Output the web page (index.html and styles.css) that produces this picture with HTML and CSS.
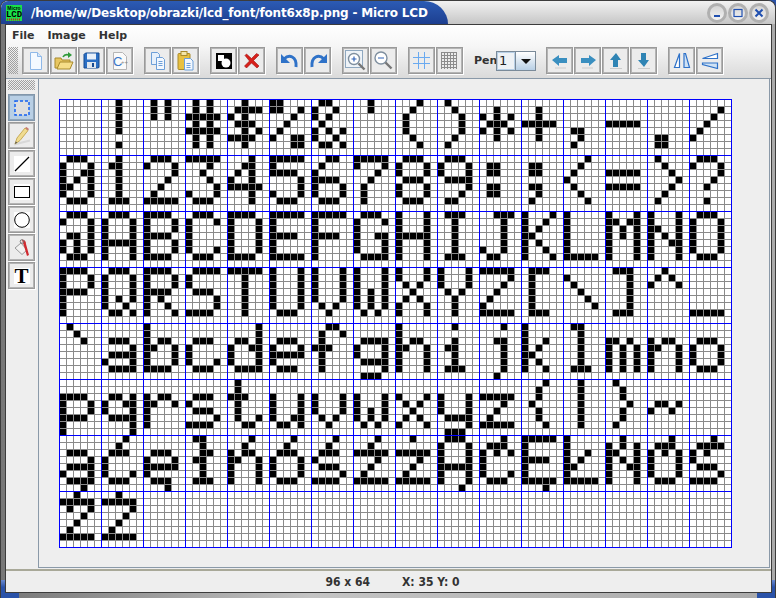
FILE: index.html
```html
<!DOCTYPE html>
<html lang="en">
<head>
  <meta charset="UTF-8">
  <meta name="viewport" content="width=device-width, initial-scale=1.0">
  <title>Micro LCD</title>
  <link rel="stylesheet" href="styles.css">
</head>
<body>
  <div class="window">
    <div class="titlebar">
      <div class="title-tab">
        <svg class="app-logo" width="16" height="16" viewBox="0 0 16 16">
          <rect width="16" height="16" fill="#19e04a"/>
          <text x="8" y="5" class="logo-small" text-anchor="middle">Micro</text>
          <text x="8" y="12" class="logo-big" text-anchor="middle">LCD</text>
          <path d="M1 14.500h14" stroke="#d01818" stroke-width="2" stroke-dasharray="1 1"/>
        </svg>
        <span class="title-text">/home/w/Desktop/obrazki/lcd_font/font6x8p.png - Micro LCD</span>
      </div>
      <div class="win-buttons">
        <div class="win-btn"><svg width="10" height="10" viewBox="0 0 10 10"><path d="M2 8h6" stroke="#1f4fb0" stroke-width="2"/></svg></div>
        <div class="win-btn"><svg width="10" height="10" viewBox="0 0 10 10"><rect x="1" y="1.500" width="8" height="7" fill="none" stroke="#1f4fb0" stroke-width="1.200"/></svg></div>
        <div class="win-btn"><svg width="10" height="10" viewBox="0 0 10 10"><path d="M1.500 1.500l7 7M8.500 1.500l-7 7" stroke="#1f4fb0" stroke-width="2"/></svg></div>
      </div>
    </div>

    <div class="frame">
      <div class="corner corner-left"></div>
      <div class="corner corner-right"></div>
      <div class="client">
        <div class="top-area">
          <div class="menubar">
            <span class="menu-item">File</span>
            <span class="menu-item">Image</span>
            <span class="menu-item">Help</span>
          </div>
          <div class="toolbar">
            <div class="grip grip-h"></div>
            <div class="tool-group">
              <div class="tool"><svg width="16" height="18" viewBox="0 0 16 18"><path d="M2.500 .5h7l4 4v13h-11z" fill="#f4f9ff" stroke="#8fb8e8"/><path d="M9.500 .5v4h4" fill="#d5e5f8" stroke="#8fb8e8"/></svg></div>
              <div class="tool"><svg width="20" height="18" viewBox="0 0 20 18"><path d="M1 6h6l1 2h8v8H1z" fill="#e8c660" stroke="#a88a2c"/><path d="M3 17l3-7h13l-3 7z" fill="#f6de88" stroke="#a88a2c"/><path d="M9 5c1-2 3-3 6-2" fill="none" stroke="#2f9a3a" stroke-width="1.600"/><path d="M14 0l4 3-4 3z" fill="#2f9a3a"/></svg></div>
              <div class="tool"><svg width="17" height="17" viewBox="0 0 17 17"><path d="M1 2.500 2.500 1H16v14.500L14.500 16H1z" fill="#2b6fc4" stroke="#174a90"/><rect x="4" y="1.500" width="9" height="6" fill="#e8f0fa"/><rect x="4" y="10" width="9" height="6" fill="#dfe6ee"/><rect x="9" y="11" width="2" height="4" fill="#174a90"/></svg></div>
              <div class="tool"><svg width="16" height="18" viewBox="0 0 16 18"><path d="M1.500 .5h9l4 4v13h-13z" fill="#fafafa" stroke="#b5b5b5"/><text x="1" y="14" class="cpp-big">C</text><text x="9" y="12" class="cpp-small">++</text></svg></div>
            </div>
            <div class="tool-group">
              <div class="tool"><svg width="16" height="18" viewBox="0 0 16 18"><path d="M1.500 .5h6l2 2v10h-8z" fill="#e6f0fb" stroke="#6d9fd8"/><path d="M6.500 5.500h6l2 2v10h-8z" fill="#f3f8fe" stroke="#6d9fd8"/><path d="M8.500 9.500h4M8.500 11.500h4M8.500 13.500h4" stroke="#6d9fd8"/></svg></div>
              <div class="tool"><svg width="17" height="20" viewBox="0 0 17 20"><rect x="1" y="2.500" width="12" height="16" rx="1" fill="#e8c040" stroke="#a88a2c"/><rect x="4" y=".5" width="6" height="4" fill="#f4e6a8" stroke="#a88a2c"/><path d="M7.500 7.500h6l2.500 2.500v9h-8.500z" fill="#f3f8fe" stroke="#6d9fd8"/><path d="M9.500 12.500h4M9.500 14.500h4M9.500 16.500h4" stroke="#6d9fd8"/></svg></div>
            </div>
            <div class="tool-group">
              <div class="tool"><svg width="16" height="16" viewBox="0 0 16 16"><rect width="16" height="16" fill="#000"/><rect x="2" y="2" width="6" height="6" fill="#fff"/><circle cx="10" cy="10" r="4.500" fill="#fff"/></svg></div>
              <div class="tool"><svg width="17" height="17" viewBox="0 0 17 17"><path d="M2 3.500 3.500 2l5 4.500 5-5L16 3l-5.500 5.500 5.500 5.500-2 2-5.500-5-5 5-2-2 5-5z" fill="#d7201a" stroke="#a01010" stroke-width=".6"/></svg></div>
            </div>
            <div class="tool-group">
              <div class="tool"><svg width="20" height="18" viewBox="0 0 20 18"><path d="M4 7c5-5 13-3 12 8" fill="none" stroke="#2f72c8" stroke-width="3"/><path d="M1 2v9h9z" fill="#2f72c8"/></svg></div>
              <div class="tool"><svg width="20" height="18" viewBox="0 0 20 18"><path d="M16 7C11 2 3 4 4 15" fill="none" stroke="#2f72c8" stroke-width="3"/><path d="M19 2v9h-9z" fill="#2f72c8"/></svg></div>
            </div>
            <div class="tool-group">
              <div class="tool"><svg width="21" height="21" viewBox="0 0 21 21"><rect x=".5" y=".5" width="17" height="17" fill="#eef3f8" stroke="#8fa8c0"/><circle cx="9" cy="9" r="5.500" fill="#fff" stroke="#7f8f9f" stroke-width="1.400"/><path d="M6.500 9h5M9 6.500v5" stroke="#2f62b8" stroke-width="1.200"/><path d="M13.500 13.500l6 6" stroke="#777" stroke-width="2.400"/></svg></div>
              <div class="tool"><svg width="21" height="21" viewBox="0 0 21 21"><circle cx="8" cy="8" r="6" fill="#fff" stroke="#7f8f9f" stroke-width="1.400"/><path d="M5 8h6" stroke="#2f62b8" stroke-width="1.200"/><path d="M12.500 12.500l6 6" stroke="#777" stroke-width="2.400"/></svg></div>
            </div>
            <div class="tool-group">
              <div class="tool"><svg width="17" height="17" viewBox="0 0 17 17"><path d="M5.500 0v17M11.500 0v17M0 5.500h17M0 11.500h17" stroke="#6aaaf0"/></svg></div>
              <div class="tool"><svg width="17" height="17" viewBox="0 0 17 17"><path d="M.5 0v17M3.500 0v17M6.500 0v17M9.500 0v17M12.500 0v17M15.500 0v17M0 .5h16M0 3.500h16M0 6.500h16M0 9.500h16M0 12.500h16M0 15.500h16" stroke="#8c8c8c"/></svg></div>
            </div>
            <div class="pen-picker">
              <span class="pen-label">Pen</span>
              <div class="combo">
                <span class="combo-value">1</span>
                <span class="combo-arrow"></span>
              </div>
            </div>
            <div class="tool-group">
              <div class="tool"><svg width="16" height="16" viewBox="0 0 16 16"><path d="M0 7l7-5v3h8v5H7v3z" fill="#3a8fc0"/><path d="M3 15h11" stroke="#ccc"/></svg></div>
              <div class="tool"><svg width="16" height="16" viewBox="0 0 16 16"><path d="M16 7L9 2v3H1v5h8v3z" fill="#3a8fc0"/><path d="M2 15h11" stroke="#ccc"/></svg></div>
              <div class="tool"><svg width="16" height="16" viewBox="0 0 16 16"><path d="M8 0l5 7h-3v7H5V7H2z" fill="#2f84b4"/><path d="M2 15.500h12" stroke="#ccc"/></svg></div>
              <div class="tool"><svg width="16" height="16" viewBox="0 0 16 16"><path d="M8 14l5-7h-3V0H5v7H2z" fill="#2f84b4"/><path d="M2 15.500h12" stroke="#ccc"/></svg></div>
            </div>
            <div class="tool-group">
              <div class="tool"><svg width="18" height="18" viewBox="0 0 18 18"><path d="M6.500 1.500v14h-5z" fill="#fff" stroke="#2f72c8" stroke-width="1.200"/><path d="M11 1.500h1.500l4 14H11z" fill="#cfe2f5" stroke="#2f72c8" stroke-width="1.200"/></svg></div>
              <div class="tool"><svg width="18" height="18" viewBox="0 0 18 18"><path d="M1.500 6.500h15v-5z" fill="#fff" stroke="#2f72c8" stroke-width="1.200"/><path d="M1.500 11v1.500l15 4V11z" fill="#cfe2f5" stroke="#2f72c8" stroke-width="1.200"/></svg></div>
            </div>
          </div>
        </div>

        <div class="main">
          <div class="sidebar">
            <div class="grip grip-v"></div>
            <div class="tool tool-active"><svg width="16" height="16" viewBox="0 0 16 16"><rect x="1" y="1" width="14" height="14" fill="#dedede" stroke="#1560f0" stroke-width="1.500" stroke-dasharray="3 2"/></svg></div>
            <div class="tool"><svg width="18" height="20" viewBox="0 0 18 20"><path d="M1 18.500l16-4" stroke="#d8d8d8" stroke-width="2"/><path d="M2 18l2-6L12 2l3 2.500-8 10z" fill="#f0dc90" stroke="#c8ac58"/><path d="M12 2l3 2.500 1-1.500-2.500-2z" fill="#c87a70"/><path d="M2 18l.7-2.500 1.600 1.100z" fill="#555"/></svg></div>
            <div class="tool"><svg class="white-icon" width="16" height="16" viewBox="0 0 16 16"><path d="M1 15L15 1" stroke="#000" stroke-width="1.200"/></svg></div>
            <div class="tool"><svg class="white-icon" width="16" height="16" viewBox="0 0 16 16"><rect x=".5" y="2.500" width="15" height="11" fill="none" stroke="#000"/></svg></div>
            <div class="tool"><svg class="white-icon" width="16" height="16" viewBox="0 0 16 16"><circle cx="8" cy="8" r="7.300" fill="none" stroke="#000"/></svg></div>
            <div class="tool"><svg width="16" height="20" viewBox="0 0 16 20"><path d="M1 10l6-5 6 7-5 4.500z" fill="#f2f2f2" stroke="#999"/><path d="M8 2c3-1 4 2 4 4l3 11-2 1-3-10" fill="#d02a30"/><circle cx="8" cy="3.500" r="1.800" fill="none" stroke="#777"/></svg></div>
            <div class="tool"><div class="white-box"><span class="t-glyph">T</span></div></div>
          </div>
          <div class="panel">
            <canvas id="pixels" width="673" height="449"></canvas>
          </div>
        </div>

        <div class="statusbar">
          <span class="status-size">96 x 64</span>
          <span class="status-pos">X: 35 Y: 0</span>
        </div>
      </div>
    </div>
  </div>

  <script src="script.js"></script>
</body>
</html>
```

FILE: styles.css
```css
* {
  margin: 0;
  padding: 0;
  box-sizing: border-box;
}

body, html {
  height: 100%;
  overflow: hidden;
  background-color: #2a52a8;
  font-family: 'DejaVu Sans', sans-serif;
}

.window {
  width: 776px;
  height: 598px;
  display: flex;
  flex-direction: column;
  border-radius: 8px 8px 0 0;
  overflow: hidden;
  border: 1px solid #3c3c3c;
  border-bottom: 0;
  background-color: #c8c8c8;
}

/* title bar */
.titlebar {
  height: 23px;
  display: flex;
  justify-content: space-between;
  background: linear-gradient(#f2f2f2, #c6c6c6);
}

.title-tab {
  width: 447px;
  display: flex;
  align-items: center;
  padding-left: 5px;
  gap: 9px;
  background: linear-gradient(#2c5bb4, #1d3f90);
  border-top-right-radius: 24px 23px;
}

.title-text {
  color: #fff;
  font-size: 12px;
  font-weight: bold;
  letter-spacing: -0.17px;
  white-space: nowrap;
}

.logo-small {
  font-family: 'Liberation Sans', sans-serif;
  font-size: 5px;
  font-weight: bold;
  fill: #000;
}

.logo-big {
  font-family: 'Liberation Mono', monospace;
  font-size: 9px;
  font-weight: bold;
  fill: #000;
}

.win-buttons {
  display: flex;
  gap: 1px;
  padding: 2px 6px 0 0;
}

.win-btn {
  width: 20px;
  height: 20px;
  border-radius: 50%;
  display: flex;
  align-items: center;
  justify-content: center;
  border: 3px solid #b0b0b0;
  background: linear-gradient(#d4d4d4, #f4f4f4);
}

/* window frame */
.frame {
  flex: 1;
  position: relative;
  display: flex;
  padding: 0 3px 5px 4px;
  min-height: 0;
  background: linear-gradient(to right, #777, #c4c4c4 40%, #aaa);
}

.corner {
  position: absolute;
  bottom: 0;
  background: linear-gradient(#6a8ad0, #2a52a8 40%);
}

.corner-left {
  left: 0;
  width: 18px;
  height: 18px;
}

.corner-right {
  right: 0;
  width: 18px;
  height: 18px;
}

.client {
  position: relative;
  flex: 1;
  display: flex;
  flex-direction: column;
  border: 1px solid #3c3c3c;
  background-color: #eee;
  min-width: 0;
}

/* menu + toolbar */
.top-area {
  background: linear-gradient(#fff, #f6f6f6 40%, #dadada);
  border-bottom: 1px solid #8a99a8;
}

.menubar {
  height: 20px;
  display: flex;
  align-items: center;
  gap: 13px;
  padding-left: 6px;
}

.menu-item {
  font-size: 11px;
  font-weight: bold;
  color: #333;
}

.toolbar {
  height: 33px;
  display: flex;
  align-items: flex-start;
  padding: 2px 0 0 2px;
}

.grip {
  background-image: repeating-conic-gradient(#a0a0a0 0 25%, transparent 0 50%);
  background-size: 2px 2px;
}

.grip-h {
  width: 10px;
  height: 27px;
  margin-right: 4px;
}

.grip-v {
  width: 27px;
  height: 10px;
  margin-bottom: 3px;
}

.tool-group {
  display: flex;
  gap: 1px;
  margin-right: 11px;
}

.tool {
  width: 27px;
  height: 27px;
  flex-shrink: 0;
  display: flex;
  align-items: center;
  justify-content: center;
  border: 1px solid #9a9a9a;
  box-shadow: inset 0 0 0 1px #b4b4b4, 1px 1px 0 #fff;
  background: #ececec;
}

.tool-active {
  background: #b8cfe5;
  border-color: #8297ab;
  box-shadow: inset 0 0 0 1px #8fa6bc;
}

.white-icon {
  background-color: #fff;
}

.white-box {
  width: 16px;
  height: 16px;
  background-color: #fff;
  display: flex;
  align-items: center;
  justify-content: center;
}

.t-glyph {
  font-family: 'Liberation Serif', serif;
  font-size: 21px;
  font-weight: bold;
  line-height: 16px;
  color: #000;
}

.cpp-big {
  font-family: 'Liberation Sans', sans-serif;
  font-size: 13px;
  fill: #3a78c8;
}

.cpp-small {
  font-family: 'Liberation Sans', sans-serif;
  font-size: 6px;
  fill: #888;
}

.pen-picker {
  display: flex;
  align-items: center;
  height: 27px;
  margin-right: 10px;
}

.pen-label {
  font-size: 11px;
  font-weight: bold;
  color: #333;
  width: 22px;
  white-space: nowrap;
}

.combo {
  width: 40px;
  height: 20px;
  display: flex;
  border: 1px solid #7a8a99;
  background-color: #eef2f6;
  margin-top: 1px;
}

.combo-value {
  flex: 1;
  font-size: 13px;
  line-height: 17px;
  padding-left: 2px;
  color: #222;
  border-right: 1px solid #7a8a99;
  box-shadow: inset 0 0 0 1px #b8cfe5;
}

.combo-arrow {
  width: 19px;
  position: relative;
  background: linear-gradient(#fff, #b8cfe5);
}

.combo-arrow::after {
  content: "";
  position: absolute;
  left: 5px;
  top: 7px;
  border-left: 5px solid transparent;
  border-right: 5px solid transparent;
  border-top: 5px solid #111;
}

/* left tools + drawing area */
.main {
  flex: 1;
  display: flex;
  min-height: 0;
}

.sidebar {
  width: 32px;
  display: flex;
  flex-direction: column;
  align-items: flex-start;
  gap: 1px;
  padding: 1px 0 0 2px;
}

.panel {
  flex: 1;
  padding: 20px 0 0 20px;
  background-color: #eee;
  border: 1px solid #8a99a8;
  border-top: 0;
  margin: 0 1px 1px 0;
}

#pixels {
  display: block;
}

.statusbar {
  height: 23px;
  display: flex;
  align-items: center;
  justify-content: center;
  gap: 32px;
  border-top: 2px solid #a8a898;
  font-size: 12px;
  font-weight: bold;
  font-stretch: condensed;
  font-family: 'DejaVu Sans Condensed', 'DejaVu Sans', sans-serif;
  color: #333;
  background-color: #eee;
  padding-left: 8px;
}
```

FILE: script.js
```js
// 6x8 font sheet, 16 glyphs per row, each glyph = 8 rows of 5 bits in hex
const glyphs = [
  "0000000000000000", "0404040404000400", "0A0A0A0000000000", "0A0A1F0A1F0A0A00",
  "040F140E051E0400", "1819020408130300", "0C12140815120D00", "0404000000000000",
  "0204080808040200", "0804020202040800", "0004150E15040000", "0004041F04040000",
  "000000000C040800", "0000001F00000000", "00000000000C0C00", "0001020408100000",

  "0E11131519110E00", "040C040404040E00", "0E11010204081F00", "1F02040201110E00",
  "02060A121F020200", "1F101E0101110E00", "0608101E11110E00", "1F11020408080800",
  "0E11110E11110E00", "0E11110F01020C00", "000C0C000C0C0000", "000C0C000C040800",
  "0204081008040200", "00001F001F000000", "0804020102040800", "0E11010204000400",

  "0E11010D15150E00", "0E1111111F111100", "1E11111E11111E00", "0E11101010110E00",
  "1E11111111111E00", "1F10101E10101F00", "1F10101E10101000", "0E11101311110F00",
  "1111111F11111100", "0E04040404040E00", "0702020202120C00", "1112141814121100",
  "1010101010101F00", "111B151511111100", "1111191513111100", "0E11111111110E00",

  "1E11111E10101000", "0E11111115120D00", "1E11111E14121100", "0F10100E01011E00",
  "1F04040404040400", "1111111111110E00", "11111111110A0400", "1111111515150A00",
  "11110A040A111100", "1111110A04040400", "1F01020408101F00", "0E08080808080E00",
  "0010080402010000", "0E02020202020E00", "040A110000000000", "0000000000001F00",

  "0804020000000000", "00000E010F110F00", "1010161911111E00", "00000E1010110E00",
  "01010D1311110F00", "00000E111F100E00", "0609081C08080800", "00000F11110F010E",
  "1010161911111100", "0400040C04040E00", "0200060202020204", "1010121418141200",
  "0C04040404040E00", "00001A1515151500", "0000161911111100", "00000E1111110E00",

  "00001E11111E1010", "00000D13110F0101", "0000161910101000", "00000E100E011E00",
  "08081C0808090600", "0000111111130D00", "00001111110A0400", "0000111115150A00",
  "0000110A040A1100", "00001111110F010E", "00001F0204081F00", "0204040804040200",
  "0404040404040400", "0804040204040800", "0000000D12000000", "0000000000000000",

  "00000E010F110F02", "02040E1010110E00", "00000E111F100E02", "0C04060C04040E00",
  "0204161911111100", "02040E1111110E00", "02040E100E011E00", "02041F0204081F00",
  "04001F0204081F00", "0E1111111F111102", "020E151010110E00", "1F10101E10101F02",
  "1010121418101F00", "0415191513111100", "020E151111110E00", "020F14100E011E00",

  "041F090204081F00", "041F010204081F00"
];

const CELL = 7;
const COLS = 96;
const ROWS = 64;

const ctx = document.getElementById("pixels").getContext("2d");
ctx.fillStyle = "#fff";
ctx.fillRect(0, 0, COLS * CELL + 1, ROWS * CELL + 1);

// black pixels
ctx.fillStyle = "#000";
glyphs.forEach((glyph, index) => {
  const left = (index % 16) * 6;
  const top = Math.floor(index / 16) * 8;
  for (let row = 0; row < 8; row++) {
    const bits = parseInt(glyph.substr(row * 2, 2), 16);
    for (let col = 0; col < 5; col++) {
      if (bits & (16 >> col)) {
        ctx.fillRect((left + col) * CELL, (top + row) * CELL, CELL, CELL);
      }
    }
  }
});

// grid, gray first so the blue glyph borders stay on top
function gridLines(color, stepX, stepY) {
  ctx.fillStyle = color;
  for (let x = 0; x <= COLS; x += stepX) ctx.fillRect(x * CELL, 0, 1, ROWS * CELL + 1);
  for (let y = 0; y <= ROWS; y += stepY) ctx.fillRect(0, y * CELL, COLS * CELL + 1, 1);
}
gridLines("#8a8a8a", 1, 1);
gridLines("#0000ff", 6, 8);
```
